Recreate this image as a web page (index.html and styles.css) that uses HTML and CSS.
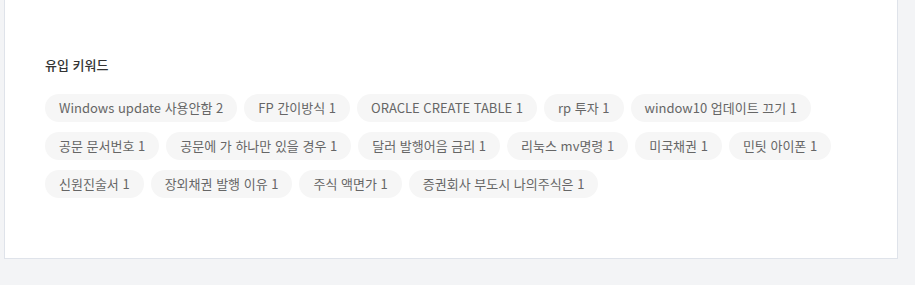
FILE: index.html
```html
<!DOCTYPE html>
<html lang="ko">
<head>
<meta charset="utf-8">
<link rel="stylesheet" href="styles.css">
</head>
<body>
<div class="card">
  <h3 class="title">유입 키워드</h3>
  <ul class="tags">
    <li class="tag">Windows update 사용안함 2</li>
    <li class="tag">FP 간이방식 1</li>
    <li class="tag">ORACLE CREATE TABLE 1</li>
    <li class="tag">rp 투자 1</li>
    <li class="tag">window10 업데이트 끄기 1</li>
    <li class="tag">공문 문서번호 1</li>
    <li class="tag">공문에 가 하나만 있을 경우 1</li>
    <li class="tag">달러 발행어음 금리 1</li>
    <li class="tag">리눅스 mv명령 1</li>
    <li class="tag">미국채권 1</li>
    <li class="tag">민팃 아이폰 1</li>
    <li class="tag">신원진술서 1</li>
    <li class="tag">장외채권 발행 이유 1</li>
    <li class="tag">주식 액면가 1</li>
    <li class="tag">증권회사 부도시 나의주식은 1</li>
  </ul>
</div>
</body>
</html>
```

FILE: styles.css
```css
html, body {
  margin: 0;
  padding: 0;
}
body {
  background: #f3f4f6;
  font-family: "Noto Sans CJK KR", "Noto Sans", sans-serif;
  height: 285px;
  overflow: hidden;
}
.card {
  box-sizing: border-box;
  margin-left: 4px;
  width: 894px;
  height: 259px;
  background: #fff;
  border: 1px solid #dfe3ea;
  border-top: none;
  padding: 56px 40px 0;
}
.title {
  margin: 0;
  font-size: 13px;
  font-weight: 500;
  line-height: 18px;
  color: #333;
}
.tags {
  list-style: none;
  margin: 20px 0 0;
  padding: 0;
  display: flex;
  flex-wrap: wrap;
  gap: 10px 7px;
}
.tag {
  background: #f6f6f6;
  color: #666;
  font-size: 13px;
  line-height: 18px;
  padding: 5px 14px;
  border-radius: 14px;
  white-space: nowrap;
}
```
